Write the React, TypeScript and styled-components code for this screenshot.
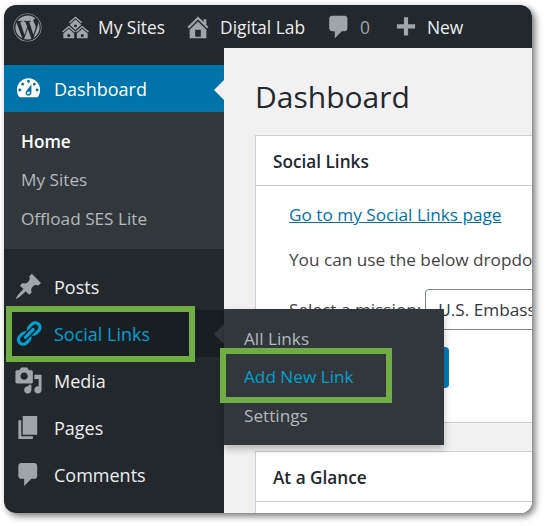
import React, { FC } from "react";
import styled, { createGlobalStyle } from "styled-components";
import { FaWordpress } from "react-icons/fa";

const GlobalStyle = createGlobalStyle`
  html, body {
    margin: 0;
    background: #ffffff;
  }
  body {
    font-family: "Open Sans", "Noto Sans", sans-serif;
  }
`;

const ICONS = {
  sites:
    "M14.27 6.87L10 3.14 5.73 6.87 5 6.14l5-4.38 5 4.38zM14 8.42l-4.05 3.43L6 8.38v-.74l4-3.5 4 3.5v.78zM11 9.7V8H9v1.7h2zm-1.73 4.03L5 10 .73 13.73 0 13l5-4.38L10 13zm10 0L15 10l-4.27 3.73L10 13l5-4.38L20 13zM5 11l4 3.5V18H1v-3.5zm10 0l4 3.5V18h-8v-3.5zM6 17v-2H4v2h2zm10 0v-2h-2v2h2z",
  home: "M16 8.5l1.53 1.53-1.06 1.06L10 4.62l-6.47 6.47-1.06-1.06L10 2.5l4 4v-2h2v4zm-6-2.46l6 5.99V18H4v-5.97zM12 17v-5H8v5h4z",
  comment:
    "M5 2h9c1.1 0 2 .9 2 2v7c0 1.1-.9 2-2 2h-2l-5 5v-5H5c-1.1 0-2-.9-2-2V4c0-1.1.9-2 2-2z",
  plus: "M17 7.9v3.2h-5.4v5.4H8.4v-5.4H3V7.9h5.4V2.5h3.2v5.4z",
  dashboard:
    "M3.76 16h12.48c1.1-1.37 1.76-3.11 1.76-5 0-4.42-3.58-8-8-8s-8 3.58-8 8c0 1.89.66 3.63 1.76 5zM10 4c.55 0 1 .45 1 1s-.45 1-1 1-1-.45-1-1 .45-1 1-1zM6 6c.55 0 1 .45 1 1s-.45 1-1 1-1-.45-1-1 .45-1 1-1zm8 0c.55 0 1 .45 1 1s-.45 1-1 1-1-.45-1-1 .45-1 1-1zm-5.37 5.55L12 7v6c0 1.1-.9 2-2 2s-2-.9-2-2c0-.57.24-1.08.63-1.45zM4 10c.55 0 1 .45 1 1s-.45 1-1 1-1-.45-1-1 .45-1 1-1zm12 0c.55 0 1 .45 1 1s-.45 1-1 1-1-.45-1-1 .45-1 1-1zm-5 3c0-.55-.45-1-1-1s-1 .45-1 1 .45 1 1 1 1-.45 1-1z",
  pin: "M10.44 3.02l1.82-1.82 6.36 6.35-1.83 1.82c-1.05-.68-2.48-.57-3.41.36l-.75.75c-.92.93-1.04 2.35-.35 3.41l-1.83 1.82-2.41-2.41-2.8 2.79c-.42.42-3.38 2.71-3.8 2.29s1.86-3.39 2.28-3.81l2.79-2.79L4.1 9.36l1.83-1.82c1.05.69 2.48.57 3.4-.36l.75-.75c.93-.92 1.05-2.35.36-3.41z",
  link: "M17.74 2.76c1.68 1.69 1.68 4.41 0 6.1l-1.53 1.52c-1.12 1.12-2.7 1.47-4.14 1.09l2.62-2.61.76-.77.76-.76c.84-.84.84-2.2 0-3.04-.84-.85-2.2-.85-3.04 0l-.77.76-3.38 3.38c-.37-1.44-.02-3.02 1.1-4.14l1.52-1.53c1.69-1.68 4.42-1.68 6.1 0zM8.59 13.43l5.34-5.34c.42-.42.42-1.1 0-1.52-.44-.43-1.13-.39-1.53 0l-5.33 5.34c-.42.42-.42 1.1 0 1.52.44.43 1.13.39 1.52 0zm-.76 2.29l4.14-4.15c.38 1.44.03 3.02-1.09 4.14l-1.52 1.53c-1.69 1.68-4.41 1.68-6.1 0-1.68-1.68-1.68-4.42 0-6.1l1.53-1.52c1.12-1.12 2.7-1.47 4.14-1.1l-4.14 4.15c-.85.84-.85 2.2 0 3.05.84.84 2.2.84 3.04 0z",
  media:
    "M13 11V4c0-.55-.45-1-1-1h-1.67L9 1H5L3.67 3H2c-.55 0-1 .45-1 1v7c0 .55.45 1 1 1h10c.55 0 1-.45 1-1zM7 4.5c1.38 0 2.5 1.12 2.5 2.5S8.38 9.5 7 9.5 4.5 8.38 4.5 7 5.62 4.5 7 4.5zM14 6h5v10.5c0 1.38-1.12 2.5-2.5 2.5S14 17.88 14 16.5s1.12-2.5 2.5-2.5c.17 0 .34.02.5.05V9h-3V6zm-4 8.05V13h2v3.5c0 1.38-1.12 2.5-2.5 2.5S7 17.88 7 16.5 8.12 14 9.5 14c.17 0 .34.02.5.05z",
  page: "M6 15V2h10v13H6zm-1 1h8v2H3V5h2v11z",
};

type IconName = keyof typeof ICONS;

const Frame = styled.div`
  position: relative;
  width: 528px;
  height: 508px;
  margin: 5px 0 0 4px;
  border-radius: 12px;
  overflow: hidden;
  display: flex;
  flex-direction: column;
  background: #f1f1f1;
`;

const FrameShadow = styled.div`
  width: 528px;
  height: 508px;
  position: absolute;
  top: 5px;
  left: 4px;
  border-radius: 12px;
  box-shadow: 3px 3px 7px rgba(0, 0, 0, 0.55);
`;

const TopBar = styled.header`
  flex: none;
  height: 43px;
  box-sizing: border-box;
  padding: 1px 0 0 9px;
  background: #23282d;
  display: flex;
  align-items: center;
  color: #eeeeee;
  font-size: 17.4px;
`;

const BarItem = styled.span<{ $gap: number; $left: number }>`
  display: flex;
  align-items: center;
  gap: ${(p) => p.$gap}px;
  margin-left: ${(p) => p.$left}px;
  white-space: nowrap;
`;

const BarCount = styled.span`
  color: #a0a5aa;
`;

const Glyph = styled.svg<{ $size: number; $color: string }>`
  flex: none;
  width: ${(p) => p.$size}px;
  height: ${(p) => p.$size}px;
  fill: ${(p) => p.$color};
`;

const Logo = styled(FaWordpress)`
  flex: none;
  width: 29px;
  height: 29px;
  color: #a0a5aa;
`;

const Body = styled.div`
  flex: 1;
  display: flex;
  min-height: 0;
`;

const Sidebar = styled.nav`
  flex: none;
  width: 220px;
  background: #23282d;
  padding-top: 17px;
`;

const MenuRow = styled.div<{ $state?: "current" | "open" }>`
  position: relative;
  height: 47px;
  display: flex;
  align-items: center;
  gap: 11px;
  padding-left: 10px;
  font-size: 18px;
  color: ${(p) =>
    p.$state === "current" ? "#ffffff" : p.$state === "open" ? "#00a0d2" : "#eeeeee"};
  background: ${(p) =>
    p.$state === "current" ? "#0073aa" : p.$state === "open" ? "#191e23" : "transparent"};
`;

const CurrentArrow = styled.span`
  position: absolute;
  right: 0;
  top: 15px;
  border: 10px solid transparent;
  border-left: 0;
  border-right-color: #f1f1f1;
`;

const OpenArrow = styled(CurrentArrow)`
  top: 14px;
  border-right-color: #32373c;
`;

const SubMenu = styled.div`
  background: #32373c;
  height: 137px;
  padding-top: 10px;
  margin-bottom: 14px;
  box-sizing: border-box;
`;

const SubItem = styled.div<{ $active?: boolean }>`
  height: 38.5px;
  display: flex;
  align-items: center;
  padding-left: 17px;
  font-size: 17.2px;
  font-weight: ${(p) => (p.$active ? 600 : 400)};
  color: ${(p) => (p.$active ? "#ffffff" : "#b4b9be")};
`;

const Flyout = styled.div`
  position: absolute;
  left: 220px;
  top: -1px;
  z-index: 3;
  width: 220px;
  height: 136px;
  box-sizing: border-box;
  padding-top: 10px;
  background: #32373c;
  box-shadow: 0 4px 7px rgba(0, 0, 0, 0.25);
`;

const FlyoutItem = styled.div<{ $active?: boolean }>`
  position: relative;
  height: 38.5px;
  display: flex;
  align-items: center;
  padding-left: 20px;
  font-size: 17.2px;
  color: ${(p) => (p.$active ? "#00a0d2" : "#b4b9be")};
`;

const Highlight = styled.span<{ $box: "row" | "flyout" }>`
  position: absolute;
  z-index: 4;
  box-sizing: border-box;
  border: 6px solid #70ad47;
  pointer-events: none;
  ${(p) =>
    p.$box === "row"
      ? "left: 2px; top: -4px; width: 189px; height: 56px;"
      : "left: -4px; top: -10px; width: 172px; height: 55px;"}
`;

const Main = styled.main`
  flex: 1;
  min-width: 0;
  padding: 27px 0 0 31px;
  overflow: hidden;
`;

const Title = styled.h1`
  margin: 0 0 16px;
  font-size: 30px;
  line-height: 44px;
  font-weight: 400;
  color: #23282d;
`;

const Card = styled.section<{ $height: number }>`
  box-sizing: border-box;
  width: 360px;
  height: ${(p) => p.$height}px;
  margin-bottom: 28px;
  background: #ffffff;
  border: 1px solid #ccd0d4;
`;

const CardTitle = styled.h2`
  margin: 0;
  height: 50px;
  box-sizing: border-box;
  padding: 2px 0 0 17px;
  display: flex;
  align-items: center;
  font-size: 17.2px;
  font-weight: 600;
  color: #23282d;
  border-bottom: 1px solid #ccd0d4;
`;

const CardBody = styled.div`
  padding: 17px 0 0 33px;
  font-size: 17.2px;
  color: #444444;
  white-space: nowrap;
`;

const CardLink = styled.a`
  display: block;
  height: 24px;
  line-height: 24px;
  margin-bottom: 21px;
  color: #0073aa;
  text-decoration: underline;
`;

const CardText = styled.p`
  margin: 0 0 17px;
  line-height: 24px;
`;

const MissionRow = styled.div`
  display: flex;
  align-items: center;
  gap: 4px;
`;

const MissionSelect = styled.div`
  box-sizing: border-box;
  width: 200px;
  height: 41px;
  padding-left: 12px;
  display: flex;
  align-items: center;
  border: 1px solid #7e8993;
  border-radius: 4px;
  color: #32373c;
`;

const SaveButton = styled.div`
  width: 160px;
  height: 41px;
  margin-top: 17px;
  border-radius: 4px;
  background: #007cba;
`;

const Icon: FC<{ name: IconName; size?: number; color?: string }> = ({
  name,
  size = 29,
  color = "#a0a5aa",
}) => (
  <Glyph viewBox="0 0 20 20" $size={size} $color={color}>
    <path d={ICONS[name]} />
  </Glyph>
);

export default function App() {
  return (
    <>
      <GlobalStyle />
      <FrameShadow />
      <Frame>
        <TopBar>
          <Logo />
          <BarItem $gap={9} $left={20}>
            <Icon name="sites" size={27} />
            My Sites
          </BarItem>
          <BarItem $gap={8} $left={19}>
            <Icon name="home" size={28} />
            Digital Lab
          </BarItem>
          <BarItem $gap={7} $left={20}>
            <Icon name="comment" size={28} />
            <BarCount>0</BarCount>
          </BarItem>
          <BarItem $gap={8} $left={23}>
            <Icon name="plus" size={26} />
            New
          </BarItem>
        </TopBar>
        <Body>
          <Sidebar>
            <MenuRow $state="current">
              <Icon name="dashboard" color="#ffffff" />
              Dashboard
              <CurrentArrow />
            </MenuRow>
            <SubMenu>
              <SubItem $active>Home</SubItem>
              <SubItem>My Sites</SubItem>
              <SubItem>Offload SES Lite</SubItem>
            </SubMenu>
            <MenuRow>
              <Icon name="pin" />
              Posts
            </MenuRow>
            <MenuRow $state="open">
              <Icon name="link" color="#00a0d2" />
              Social Links
              <OpenArrow />
              <Highlight $box="row" />
              <Flyout>
                <FlyoutItem>All Links</FlyoutItem>
                <FlyoutItem $active>
                  Add New Link
                  <Highlight $box="flyout" />
                </FlyoutItem>
                <FlyoutItem>Settings</FlyoutItem>
              </Flyout>
            </MenuRow>
            <MenuRow>
              <Icon name="media" />
              Media
            </MenuRow>
            <MenuRow>
              <Icon name="page" />
              Pages
            </MenuRow>
            <MenuRow>
              <Icon name="comment" />
              Comments
            </MenuRow>
          </Sidebar>
          <Main>
            <Title>Dashboard</Title>
            <Card $height={288}>
              <CardTitle>Social Links</CardTitle>
              <CardBody>
                <CardLink>Go to my Social Links page</CardLink>
                <CardText>You can use the below dropdown</CardText>
                <MissionRow>
                  Select a mission:
                  <MissionSelect>U.S. Embassy</MissionSelect>
                </MissionRow>
                <SaveButton />
              </CardBody>
            </Card>
            <Card $height={200}>
              <CardTitle>At a Glance</CardTitle>
            </Card>
          </Main>
        </Body>
      </Frame>
    </>
  );
}
